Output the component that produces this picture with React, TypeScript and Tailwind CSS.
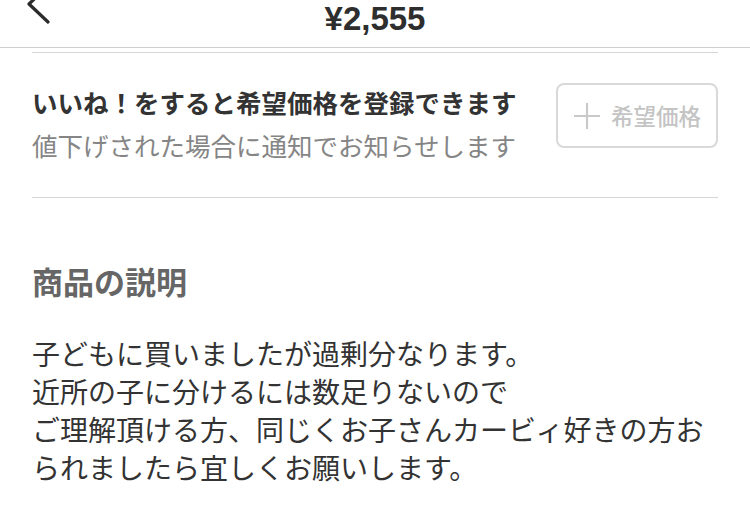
const jp = "font-['Noto_Sans_CJK_JP','Noto_Sans',sans-serif]";

function BackChevron() {
  return (
    <svg
      className="absolute left-[20px] top-[-20px] h-[48px] w-[36px]"
      viewBox="0 0 36 48"
      fill="none"
      stroke="#2b2b2b"
      strokeWidth="3.2"
      strokeLinecap="round"
      strokeLinejoin="round"
    >
      <path d="M28 6 L9 24 L28 42" />
    </svg>
  );
}

function PlusIcon() {
  return (
    <svg className="h-[28px] w-[28px]" viewBox="0 0 28 28" stroke="#c9c9c9" strokeWidth="2.2" fill="none">
      <path d="M14 1 V27 M1 14 H27" />
    </svg>
  );
}

export default function App() {
  return (
    <div className={`w-[750px] h-[510px] overflow-hidden bg-white ${jp}`}>
      {/* Header */}
      <header className="relative h-[48px] border-b border-[#cfcfcf] flex justify-center pt-[3px]">
        <BackChevron />
        <span className="font-['Liberation_Sans',Arial,sans-serif] font-bold text-[33px] leading-[32px] text-[#2e2e2e]">
          ¥2,555
        </span>
      </header>

      <div className="px-[32px]">
        {/* Price alert */}
        <section className="mt-[4px] border-t border-b border-[#d6d6d6] pt-[31px] pb-[34px] flex items-start justify-between">
          <div className="flex flex-col gap-[7px]">
            <p className="text-[25.5px] leading-[36px] font-bold text-[#333]">
              いいね！をすると希望価格を登録できます
            </p>
            <p className="text-[25.5px] leading-[36px] text-[#858585]">
              値下げされた場合に通知でお知らせします
            </p>
          </div>
          <button className="w-[162px] h-[65px] rounded-[8px] border-2 border-[#d9d9d9] flex items-center justify-center gap-[10px] -mt-[1px]">
            <PlusIcon />
            <span className="text-[22.5px] font-medium text-[#c4c4c4] leading-none">希望価格</span>
          </button>
        </section>

        {/* Description */}
        <section className="pt-[63px]">
          <h2 className="text-[31px] leading-[40px] font-bold text-[#666]">商品の説明</h2>
          <p className="mt-[33px] text-[28px] leading-[38px] text-[#333]">
            子どもに買いましたが過剰分なります。
            <br />
            近所の子に分けるには数足りないので
            <br />
            ご理解頂ける方、同じくお子さんカービィ好きの方おられましたら宜しくお願いします。
          </p>
        </section>
      </div>
    </div>
  );
}
